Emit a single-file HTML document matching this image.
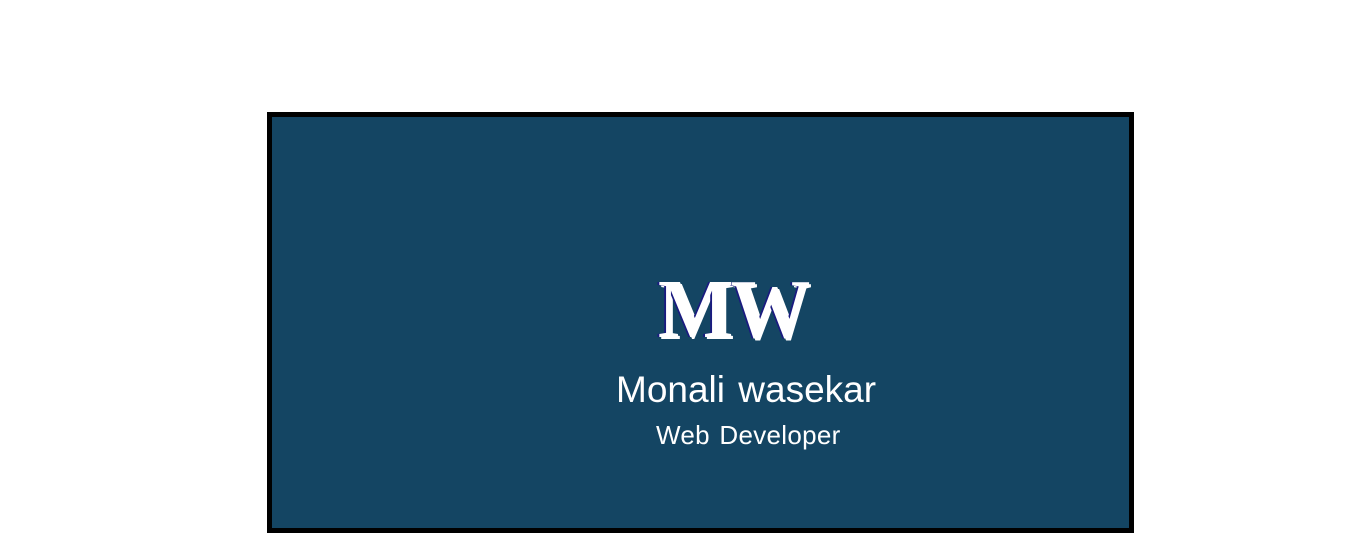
<!DOCTYPE html>
<html><head><style>
body{margin:0;width:1353px;height:554px;background:#fff;position:relative;overflow:hidden;font-family:"Liberation Sans",sans-serif}
.card{position:absolute;left:267px;top:112px;width:857px;height:411px;border:5px solid #000;background:#144563}
.t{position:absolute;color:#fff;white-space:nowrap;line-height:1}
.mw{left:386px;top:151px;font-family:"Liberation Serif",serif;font-weight:bold;font-size:84px;text-shadow:-2px 0 0 #1a1a80,2px 2px 0 #fff;color:#fff;letter-spacing:-3px;transform:scaleX(0.95);transform-origin:left}
.n{left:344px;top:254px;font-size:37px;letter-spacing:0;word-spacing:3px}
.w{left:384px;top:305px;font-size:26px;letter-spacing:0.3px;word-spacing:2px}
</style></head><body>
<div class="card">
<div class="t mw">MW</div>
<div class="t n">Monali wasekar</div>
<div class="t w">Web Developer</div>
</div>
</body></html>
